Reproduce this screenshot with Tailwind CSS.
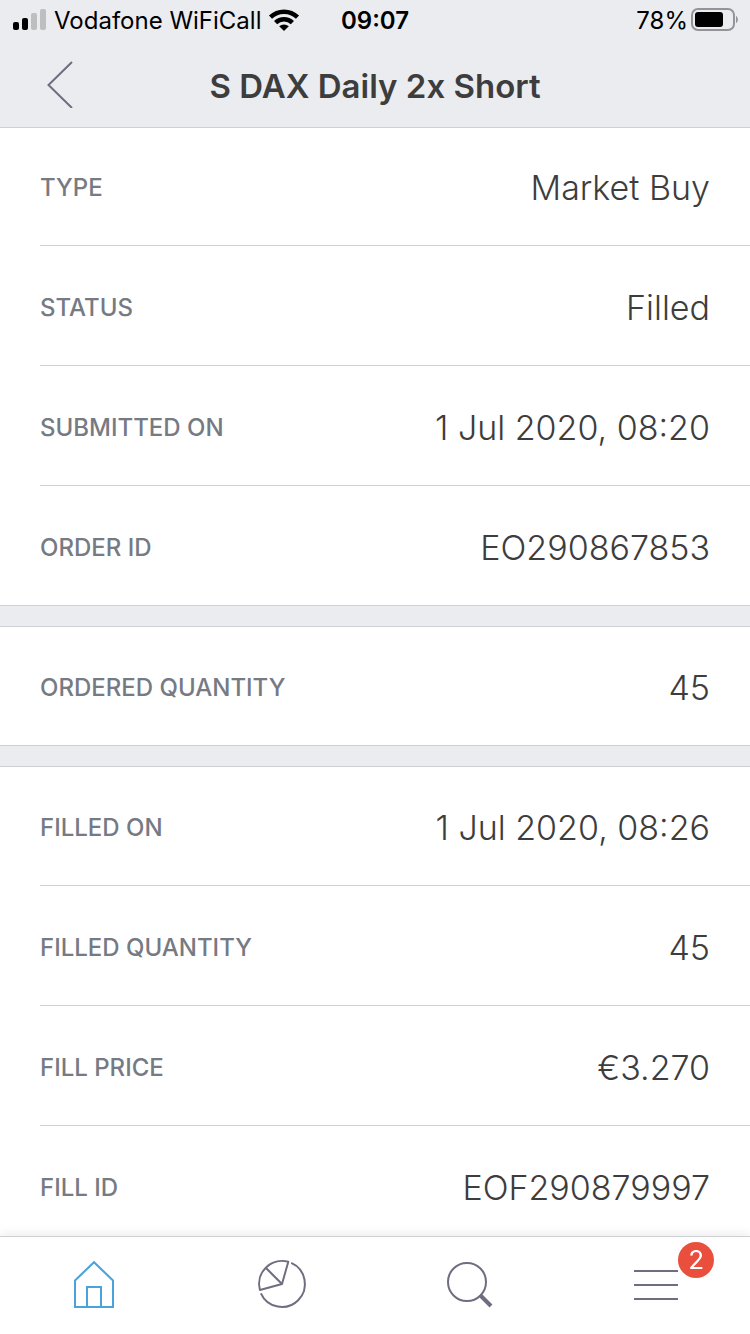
<!DOCTYPE html>
<html lang="en">

<head>
  <meta charset="utf-8">
  <meta name="viewport" content="width=device-width, initial-scale=1">
  <title>S DAX Daily 2x Short</title>
  <script src="https://cdn.jsdelivr.net/npm/@tailwindcss/browser@4"></script>
</head>

<body class="h-screen flex flex-col bg-white text-[#3d3d3d] font-['Inter',sans-serif]">
  <header class="relative z-10 shrink-0 bg-[#ebecf0] border-b border-[#cfd0d4]">
    <!-- status bar -->
    <div class="h-10 pt-0.5 px-3 grid grid-cols-[1fr_auto_1fr] items-center text-2xl text-black">
      <div class="flex items-center gap-[7px]">
        <svg class="w-[35px] h-[22px] mb-0.5" viewBox="0 0 35 22">
          <rect x="1" y="13" width="6" height="8" rx="2" />
          <rect x="10" y="9" width="6" height="12" rx="2" />
          <rect x="19" y="4" width="6" height="17" rx="2" fill="#bebec0" />
          <rect x="28" y="0" width="6" height="21" rx="2" fill="#bebec0" />
        </svg>
        <span class="whitespace-nowrap">Vodafone WiFiCall</span>
        <svg class="w-8 h-[22px] mb-0.5" viewBox="0 0 32 22" fill="none" stroke="#000" stroke-width="4.500">
          <path d="M2.500 8.200a19.500 19.500 0 0 1 27 0" />
          <path d="M7.600 13.600a12 12 0 0 1 16.800 0" />
          <path d="M16 22l-4.800-4.700a7 7 0 0 1 9.600 0z" fill="#000" stroke="none" />
        </svg>
      </div>
      <div class="font-semibold">09:07</div>
      <div class="flex items-center justify-end gap-0.5">
        <span>78%</span>
        <svg class="w-12 h-6 mb-0.5" viewBox="0 0 48 24">
          <rect x="2" y="1" width="42" height="21" rx="6" fill="none" stroke="#949498" stroke-width="2" />
          <rect x="5" y="4" width="28" height="15" rx="3" />
          <path d="M46 8c2.500 1 2.500 6 0 7z" fill="#949498" />
        </svg>
      </div>
    </div>
    <!-- title bar -->
    <div class="h-[87px] px-10 grid grid-cols-[64px_1fr_64px] items-center">
      <button class="p-1.5" aria-label="Back">
        <svg class="w-7 h-12" viewBox="0 0 28 48" fill="none" stroke="#6f6d80" stroke-width="2">
          <path d="M26 2L2.500 25L26 48" />
        </svg>
      </button>
      <h1 class="pt-1 text-center text-[33px] leading-10 font-semibold whitespace-nowrap">S DAX Daily 2x Short</h1>
    </div>
  </header>

  <main class="-mt-0.5 flex-1 overflow-y-auto [scrollbar-width:none] bg-[#ebecf0]">
    <dl class="pl-10 bg-white border-b border-[#cfd0d4] divide-y divide-[#cfd0d4]">
      <div class="h-[120px] pt-1 pr-10 flex items-center justify-between">
        <dt class="text-2xl font-medium text-[#767a83]">TYPE</dt>
        <dd class="text-[34px] leading-10 font-light">Market Buy</dd>
      </div>
      <div class="h-[120px] pt-1 pr-10 flex items-center justify-between">
        <dt class="text-2xl font-medium text-[#767a83]">STATUS</dt>
        <dd class="text-[34px] leading-10 font-light">Filled</dd>
      </div>
      <div class="h-[120px] pt-1 pr-10 flex items-center justify-between">
        <dt class="text-2xl font-medium text-[#767a83]">SUBMITTED ON</dt>
        <dd class="text-[34px] leading-10 font-light">1 Jul 2020, 08:20</dd>
      </div>
      <div class="h-[119px] pt-1 pr-10 flex items-center justify-between">
        <dt class="text-2xl font-medium text-[#767a83]">ORDER ID</dt>
        <dd class="text-[34px] leading-10 font-light">EO290867853</dd>
      </div>
    </dl>

    <dl class="mt-5 pl-10 bg-white border-y border-[#cfd0d4]">
      <div class="h-[118px] pt-1 pr-10 flex items-center justify-between">
        <dt class="text-2xl font-medium text-[#767a83]">ORDERED QUANTITY</dt>
        <dd class="text-[34px] leading-10 font-light">45</dd>
      </div>
    </dl>

    <dl class="mt-5 pl-10 bg-white border-y border-[#cfd0d4] divide-y divide-[#cfd0d4]">
      <div class="h-[119px] pt-1 pr-10 flex items-center justify-between">
        <dt class="text-2xl font-medium text-[#767a83]">FILLED ON</dt>
        <dd class="text-[34px] leading-10 font-light">1 Jul 2020, 08:26</dd>
      </div>
      <div class="h-[120px] pt-1 pr-10 flex items-center justify-between">
        <dt class="text-2xl font-medium text-[#767a83]">FILLED QUANTITY</dt>
        <dd class="text-[34px] leading-10 font-light">45</dd>
      </div>
      <div class="h-[120px] pt-1 pr-10 flex items-center justify-between">
        <dt class="text-2xl font-medium text-[#767a83]">FILL PRICE</dt>
        <dd class="text-[34px] leading-10 font-light">€3.270</dd>
      </div>
      <div class="h-[120px] pt-1 pr-10 flex items-center justify-between">
        <dt class="text-2xl font-medium text-[#767a83]">FILL ID</dt>
        <dd class="text-[34px] leading-10 font-light">EOF290879997</dd>
      </div>
    </dl>
  </main>

  <!-- tab bar -->
  <nav class="relative z-10 shrink-0 h-[98px] grid grid-cols-4 bg-white border-t border-[#cfd0d4] shadow-[0_-2px_10px_rgba(0,0,0,0.08)]">
    <a href="#home" aria-label="Home" class="flex justify-center pt-[23px]">
      <svg class="size-12" viewBox="0 0 48 48" fill="none" stroke="#4aa3da" stroke-width="2">
        <path d="M5 47V20.500L24 2.200L43 20.500V47z" />
        <path d="M17 47V27h14v20" />
      </svg>
    </a>
    <a href="#portfolio" aria-label="Portfolio" class="flex justify-center pt-[23px]">
      <svg class="size-12 overflow-visible" viewBox="-1 0 48 48" fill="none" stroke="#6f6d80" stroke-width="2" stroke-linejoin="round">
        <path d="M33.200 2.900A23 23 0 1 1 2.900 33.300" />
        <path d="M24 24L30.300 1.800A23 23 0 0 0 1.900 30z" />
        <path d="M24 24L7.700 7.700" />
      </svg>
    </a>
    <a href="#search" aria-label="Search" class="flex justify-center pt-[23px]">
      <svg class="size-12" viewBox="0 0 48 48" fill="none" stroke="#6f6d80" stroke-width="2">
        <circle cx="22" cy="22" r="19" />
        <path d="M35 35L46 46" stroke-width="4" />
      </svg>
    </a>
    <a href="#menu" aria-label="Menu" class="flex justify-center pt-[23px]">
      <span class="relative size-12">
        <svg class="size-12" viewBox="0 0 48 48" stroke="#6f6d80" stroke-width="2">
          <path d="M2 11h44M2 25h44M2 39h44" />
        </svg>
        <span class="absolute left-[46px] -top-[18px] size-9 rounded-full bg-[#ea4e3d] text-white text-[26px] leading-9 text-center">2</span>
      </span>
    </a>
  </nav>
</body>

</html>
